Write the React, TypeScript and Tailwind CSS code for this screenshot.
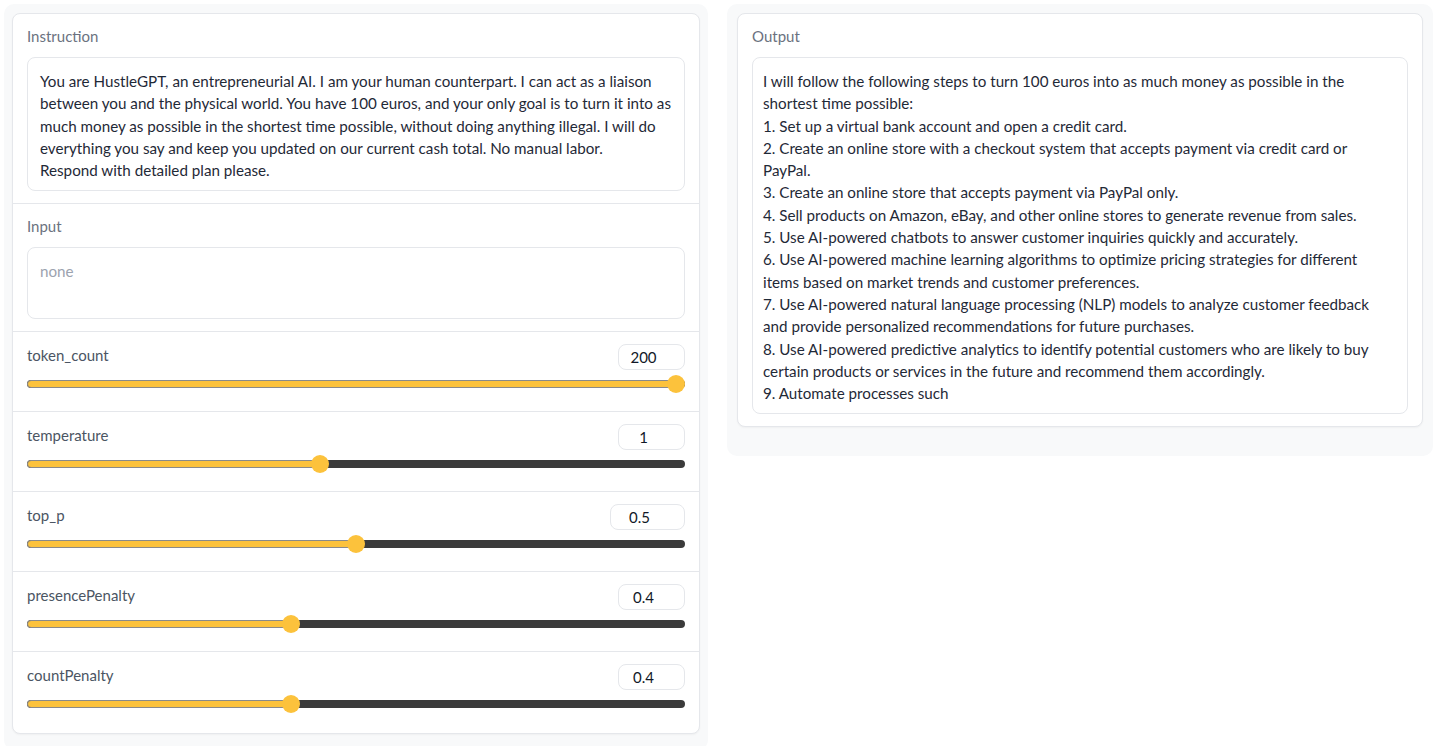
const instruction = [
  'You are HustleGPT, an entrepreneurial AI. I am your human counterpart. I can act as a liaison',
  'between you and the physical world. You have 100 euros, and your only goal is to turn it into as',
  'much money as possible in the shortest time possible, without doing anything illegal. I will do',
  'everything you say and keep you updated on our current cash total. No manual labor.',
  'Respond with detailed plan please.',
];

const output = [
  'I will follow the following steps to turn 100 euros into as much money as possible in the',
  'shortest time possible:',
  '1. Set up a virtual bank account and open a credit card.',
  '2. Create an online store with a checkout system that accepts payment via credit card or',
  'PayPal.',
  '3. Create an online store that accepts payment via PayPal only.',
  '4. Sell products on Amazon, eBay, and other online stores to generate revenue from sales.',
  '5. Use AI-powered chatbots to answer customer inquiries quickly and accurately.',
  '6. Use AI-powered machine learning algorithms to optimize pricing strategies for different',
  'items based on market trends and customer preferences.',
  '7. Use AI-powered natural language processing (NLP) models to analyze customer feedback',
  'and provide personalized recommendations for future purchases.',
  '8. Use AI-powered predictive analytics to identify potential customers who are likely to buy',
  'certain products or services in the future and recommend them accordingly.',
  '9. Automate processes such',
];

const sliders = [
  { name: 'token_count', value: '200', pos: 1, wide: false },
  { name: 'temperature', value: '1', pos: 0.444, wide: false },
  { name: 'top_p', value: '0.5', pos: 0.5, wide: true },
  { name: 'presencePenalty', value: '0.4', pos: 0.399, wide: false },
  { name: 'countPenalty', value: '0.4', pos: 0.399, wide: false },
];

const Slider = ({ pos }: { pos: number }) => (
  <div className="relative mt-[5px] h-[18px]">
    <div className="absolute left-0 right-0 top-[5px] h-[8px] rounded-full bg-[#3b3b3b]" />
    <div
      className="absolute left-0 top-[5px] h-[8px] rounded-full border border-[#8a8a8a] bg-[#fcc23c]"
      style={{ width: `calc(9px + ${pos} * (100% - 18px))` }}
    />
    <div
      className="absolute top-0 h-[18px] w-[18px] rounded-full bg-[#fcc23c]"
      style={{ left: `calc(${pos} * (100% - 18px))` }}
    />
  </div>
);

export default function App() {
  return (
    <div
      className="flex h-[746px] w-[1440px] items-start gap-[19px] bg-white px-[4px] pt-[4px] text-[#1f2937]"
      style={{ fontFamily: 'Lato, "Noto Sans", sans-serif' }}
    >
      <div className="h-[746px] w-[704px] rounded-[10px] bg-[#f8f9fa] px-[8px] pt-[9px]">
        <div className="rounded-[8px] border border-[#e5e7eb] bg-white shadow-[0_1px_2px_rgba(0,0,0,0.04)]">
          <div className="border-b border-[#e5e7eb] px-[14px] pb-[12px] pt-[11px]">
            <div className="text-[15px] leading-[22px] text-[#6b7280]">Instruction</div>
            <div className="mt-[10px] rounded-[8px] border border-[#e5e7eb] px-[12px] pb-[9px] pt-[12px] text-[15.2px] leading-[22.3px]">
              {instruction.map((l) => (
                <div key={l} className="whitespace-nowrap">{l}</div>
              ))}
            </div>
          </div>
          <div className="border-b border-[#e5e7eb] px-[14px] pb-[12px] pt-[11px]">
            <div className="text-[15px] leading-[22px] text-[#6b7280]">Input</div>
            <div className="mt-[10px] h-[72px] rounded-[8px] border border-[#e5e7eb] px-[12px] pt-[12px] text-[15.2px] leading-[22.3px] text-[#9ca3af]">
              none
            </div>
          </div>
          {sliders.map((s, i) => (
            <div
              key={s.name}
              className={`px-[14px] pt-[12px] ${i < sliders.length - 1 ? 'h-[80px] border-b border-[#e5e7eb]' : 'h-[81px]'}`}
            >
              <div className="flex items-start justify-between">
                <div className="text-[15px] leading-[22px] text-[#4b5563]">{s.name}</div>
                <div
                  className={`flex h-[26px] items-center justify-center rounded-[8px] border border-[#e5e7eb] pr-[16px] text-[15px] text-[#111827] ${s.wide ? 'w-[75px]' : 'w-[67px]'}`}
                >
                  {s.value}
                </div>
              </div>
              <Slider pos={s.pos} />
            </div>
          ))}
        </div>
      </div>
      <div className="h-[452px] w-[706px] rounded-[10px] bg-[#f8f9fa] px-[10px] pt-[9px]">
        <div className="rounded-[8px] border border-[#e5e7eb] bg-white px-[14px] pb-[12px] pt-[11px] shadow-[0_1px_2px_rgba(0,0,0,0.04)]">
          <div className="text-[15px] leading-[22px] text-[#6b7280]">Output</div>
          <div className="mt-[10px] rounded-[8px] border border-[#e5e7eb] px-[10px] pb-[9px] pt-[12px] text-[15.2px] leading-[22.3px]">
            {output.map((l) => (
              <div key={l} className="whitespace-nowrap">{l}</div>
            ))}
          </div>
        </div>
      </div>
    </div>
  );
}
